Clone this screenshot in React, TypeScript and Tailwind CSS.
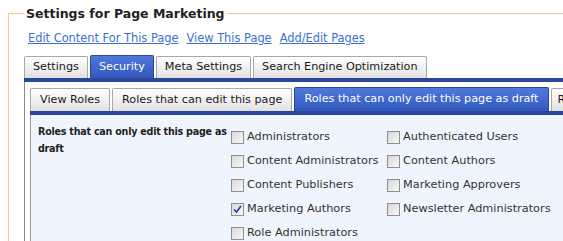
import React from 'react';

const outerTabs = [
  { label: 'Settings', active: false },
  { label: 'Security', active: true },
  { label: 'Meta Settings', active: false },
  { label: 'Search Engine Optimization', active: false },
];

const innerTabs = [
  { label: 'View Roles', active: false },
  { label: 'Roles that can edit this page', active: false },
  { label: 'Roles that can only edit this page as draft', active: true },
  { label: 'Roles that can view this page', active: false },
];

const roles: (null | { name: string; checked: boolean })[] = [
  { name: 'Administrators', checked: false },
  { name: 'Authenticated Users', checked: false },
  { name: 'Content Administrators', checked: false },
  { name: 'Content Authors', checked: false },
  { name: 'Content Publishers', checked: false },
  { name: 'Marketing Approvers', checked: false },
  { name: 'Marketing Authors', checked: true },
  { name: 'Newsletter Administrators', checked: false },
  { name: 'Role Administrators', checked: false },
  null,
];

function Tab({ label, active, tall }: { label: string; active: boolean; tall?: boolean }) {
  if (active) {
    return (
      <div
        className={
          (tall ? 'h-[24px] px-[9px] ' : 'h-[23px] px-[8px] ') +
          'flex items-center rounded-t-[2px] border border-b-0 border-[#2a4595] bg-gradient-to-b from-[#5079de] to-[#3358bd] text-white whitespace-nowrap'
        }
      >
        {label}
      </div>
    );
  }
  return (
    <div
      className={
        (tall ? 'h-[23px] px-[9px] last:pl-[6px] ' : 'h-[22px] px-[8px] ') +
        'flex items-center rounded-t-[2px] border border-b-0 border-[#a8a8a8] bg-gradient-to-b from-[#ffffff] to-[#e2e2e2] text-[#1a1a1a] whitespace-nowrap'
      }
    >
      {label}
    </div>
  );
}

function Checkbox({ checked }: { checked: boolean }) {
  return (
    <span className="w-[13px] h-[13px] shrink-0 border border-[#8e8f8f] bg-gradient-to-br from-[#d6d6d6] to-[#fbfbfb] flex items-center justify-center">
      {checked && (
        <svg width="9" height="9" viewBox="0 0 9 9">
          <path d="M1 4.5 L3.5 7 L8 1" fill="none" stroke="#2a3f9a" strokeWidth="1.6" />
        </svg>
      )}
    </span>
  );
}

export default function App() {
  return (
    <div className="w-[563px] h-[241px] overflow-hidden bg-white font-['DejaVu_Sans',Verdana,sans-serif] text-[11.2px]">
      <fieldset className="ml-2 mt-[5px] w-[640px] border border-[#fdc590] pl-[15px] pb-4">
        <legend className="px-[2px] text-[12.5px] leading-[17px] font-bold text-[#222]">
          Settings for Page Marketing
        </legend>

        {/* Links */}
        <div className="pl-1 mt-[9px] flex gap-2 leading-[14px] text-[11.4px]">
          <a className="text-[#3c6fd1] underline">Edit Content For This Page</a>
          <a className="text-[#3c6fd1] underline">View This Page</a>
          <a className="text-[#3c6fd1] underline">Add/Edit Pages</a>
        </div>

        {/* Outer tabs */}
        <div className="mt-[10px] flex items-end gap-[2px]">
          {outerTabs.map((t) => (
            <Tab key={t.label} label={t.label} active={t.active} />
          ))}
        </div>
        <div className="h-[4px] bg-[#2b479c]" />

        <div className="border-l border-[#8a8a8a] pl-[5px] pt-[5px]">
          {/* Inner tabs */}
          <div className="flex items-end gap-[2px]">
            {innerTabs.map((t) => (
              <Tab key={t.label} label={t.label} active={t.active} tall />
            ))}
          </div>
          <div className="h-[4px] bg-[#2b479c]" />

          <div className="flex border-l border-[#9a9a9a] bg-[#eef5fe] h-[140px]">
            <div className="w-[200px] shrink-0 pl-[7px] pt-[8px] text-[9.6px] tracking-[-0.25px] font-bold leading-[17px] text-[#222]">
              Roles that can only edit this page as draft
            </div>
            <div className="pt-[10px] grid grid-cols-[156px_auto] auto-rows-[24px] text-[#333] text-[11.3px]">
              {roles.map((r, i) =>
                r ? (
                  <label key={r.name} className="flex items-center gap-[3px] whitespace-nowrap">
                    <Checkbox checked={r.checked} />
                    <span>{r.name}</span>
                  </label>
                ) : (
                  <span key={i} />
                )
              )}
            </div>
          </div>
        </div>
      </fieldset>
    </div>
  );
}
